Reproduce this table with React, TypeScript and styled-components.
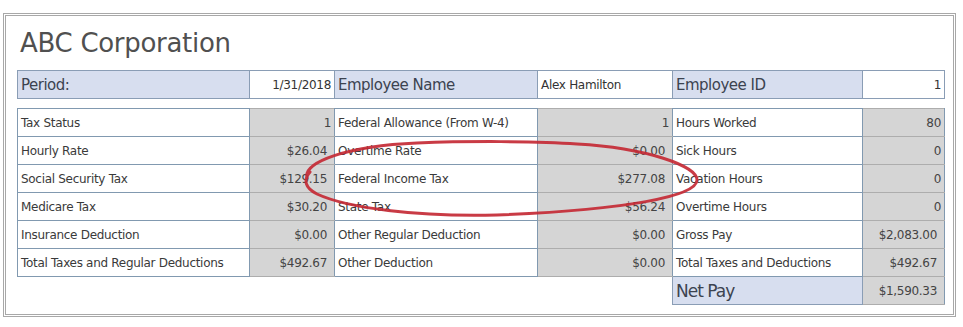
import React from 'react';
import styled, { createGlobalStyle } from 'styled-components';

const GlobalStyle = createGlobalStyle`
  body {
    margin: 0;
    background: #ffffff;
    font-family: "DejaVu Sans", Verdana, sans-serif;
    color: #3a3a3a;
  }
`;

const Page = styled.div`
  padding: 13px 0 0 3px;
`;

const Frame = styled.div`
  box-sizing: border-box;
  width: 953px;
  height: 304px;
  border: 3px double #a8a8a8;
  padding: 0 0 0 11px;
`;

const Title = styled.h1`
  margin: 11px 0 11px 3px;
  height: 32px;
  line-height: 32px;
  font-size: 26px;
  font-weight: normal;
  letter-spacing: -0.3px;
  color: #505050;
`;

const Sheet = styled.div`
  position: relative;
`;

const Grid = styled.table`
  border-collapse: collapse;
  table-layout: fixed;
  width: 927px;
  margin-bottom: 9px;
`;

const Row = styled.tr`
  height: 28px;
`;

const baseCell = `
  box-sizing: border-box;
  padding: 0 3px;
  font-size: 12px;
  letter-spacing: -0.3px;
  white-space: nowrap;
  overflow: hidden;
  vertical-align: middle;
`;

const Label = styled.td`
  ${baseCell}
  background: #ffffff;
  border: 1px solid #8199b0;
  text-align: left;
  color: #3a3a3a;
`;

const Value = styled.td<{ $money?: boolean }>`
  ${baseCell}
  background: #d5d5d5;
  border-top: 1px solid #adadad;
  border-bottom: 1px solid #adadad;
  border-left: 1px solid #8199b0;
  border-right: 1px solid #8199b0;
  text-align: right;
  padding-right: ${(p) => (p.$money ? '7px' : '3px')};
  color: #444444;
`;

const HeadLabel = styled.td<{ $big?: boolean }>`
  ${baseCell}
  background: #d7deef;
  border: 1px solid #8a9db5;
  font-size: ${(p) => (p.$big ? '17px' : '15px')};
  letter-spacing: ${(p) => (p.$big ? '-1px' : '-0.5px')};
  color: #3c4350;
`;

const HeadValue = styled.td<{ $align?: 'left' | 'right' }>`
  ${baseCell}
  background: #ffffff;
  border: 1px solid #8a9db5;
  text-align: ${(p) => p.$align ?? 'right'};
  color: #333333;
`;

const Blank = styled.td`
  border: none;
`;

const Circle = styled.svg`
  position: absolute;
  left: 0;
  top: 0;
  overflow: visible;
  pointer-events: none;
`;

type Cell = [string, string, boolean?];

const rows: Cell[][] = [
  [
    ['Tax Status', '1'],
    ['Federal Allowance (From W-4)', '1'],
    ['Hours Worked', '80'],
  ],
  [
    ['Hourly Rate', '$26.04', true],
    ['Overtime Rate', '$0.00', true],
    ['Sick Hours', '0'],
  ],
  [
    ['Social Security Tax', '$129.15', true],
    ['Federal Income Tax', '$277.08', true],
    ['Vacation Hours', '0'],
  ],
  [
    ['Medicare Tax', '$30.20', true],
    ['State Tax', '$56.24', true],
    ['Overtime Hours', '0'],
  ],
  [
    ['Insurance Deduction', '$0.00', true],
    ['Other Regular Deduction', '$0.00', true],
    ['Gross Pay', '$2,083.00', true],
  ],
  [
    ['Total Taxes and Regular Deductions', '$492.67', true],
    ['Other Deduction', '$0.00', true],
    ['Total Taxes and Deductions', '$492.67', true],
  ],
];

const Columns = () => (
  <colgroup>
    <col style={{ width: 232 }} />
    <col style={{ width: 85 }} />
    <col style={{ width: 203 }} />
    <col style={{ width: 135 }} />
    <col style={{ width: 190 }} />
    <col style={{ width: 82 }} />
  </colgroup>
);

export default function App() {
  return (
    <>
      <GlobalStyle />
      <Page>
        <Frame>
          <Title>ABC Corporation</Title>
          <Sheet>
            <Grid>
              <Columns />
              <tbody>
                <Row>
                  <HeadLabel>Period:</HeadLabel>
                  <HeadValue>1/31/2018</HeadValue>
                  <HeadLabel>Employee Name</HeadLabel>
                  <HeadValue $align="left">Alex Hamilton</HeadValue>
                  <HeadLabel>Employee ID</HeadLabel>
                  <HeadValue>1</HeadValue>
                </Row>
              </tbody>
            </Grid>
            <Grid>
              <Columns />
              <tbody>
                {rows.map((row, i) => (
                  <Row key={i}>
                    {row.map(([label, value, money]) => (
                      <React.Fragment key={label}>
                        <Label>{label}</Label>
                        <Value $money={money}>{value}</Value>
                      </React.Fragment>
                    ))}
                  </Row>
                ))}
                <Row>
                  <Blank />
                  <Blank />
                  <Blank />
                  <Blank />
                  <HeadLabel $big>Net Pay</HeadLabel>
                  <Value $money>$1,590.33</Value>
                </Row>
              </tbody>
            </Grid>
            <Circle width="926" height="234">
              <path
                d="M 290 108 C 286 92, 330 76, 400 73 C 450 71, 520 71, 560 74 C 630 78, 680 96, 680 110 C 680 126, 610 140, 480 145 C 400 147, 330 138, 300 124 C 288 118, 286 110, 293 102"
                fill="none"
                stroke="#c42a35"
                strokeWidth="3"
                strokeLinecap="round"
                opacity="0.92"
              />
            </Circle>
          </Sheet>
        </Frame>
      </Page>
    </>
  );
}
